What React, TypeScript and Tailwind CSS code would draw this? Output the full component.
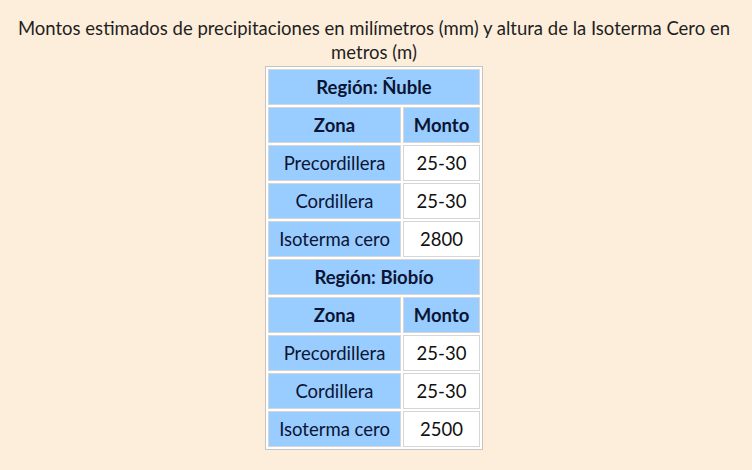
const regions = [
  { name: 'Ñuble', rows: [['Precordillera', '25-30'], ['Cordillera', '25-30'], ['Isoterma cero', '2800']] },
  { name: 'Biobío', rows: [['Precordillera', '25-30'], ['Cordillera', '25-30'], ['Isoterma cero', '2500']] },
];

const cell = 'border border-[#d6d6d6] h-[36px] p-0 text-center align-middle';

export default function App() {
  return (
    <div className="min-h-[470px] w-[752px] bg-[#fdeedb] pt-[16px] pr-[4px] font-['Lato','Open_Sans',sans-serif] text-[18.5px] leading-[24px] text-[#1f1f1f]">
      <p className="text-center px-2">
        Montos estimados de precipitaciones en milímetros (mm) y altura de la Isoterma Cero en metros (m)
      </p>
      <table className="mx-auto mt-[2px] border-separate border-spacing-[2px] border border-[#c4c4c4] bg-white">
        <tbody>
          {regions.map((r) => (
            <RegionRows key={r.name} region={r} />
          ))}
        </tbody>
      </table>
    </div>
  );
}

function RegionRows({ region }: { region: { name: string; rows: string[][] } }) {
  return (
    <>
      <tr>
        <th colSpan={2} className={`${cell} bg-[#99ccff] font-bold text-[#0b1533]`}>
          Región: {region.name}
        </th>
      </tr>
      <tr>
        <th className={`${cell} w-[133px] bg-[#99ccff] font-bold text-[#0b1533]`}>Zona</th>
        <th className={`${cell} w-[77px] bg-[#99ccff] font-bold text-[#0b1533]`}>Monto</th>
      </tr>
      {region.rows.map(([zona, monto]) => (
        <tr key={zona}>
          <td className={`${cell} bg-[#99ccff] text-[#0b1533]`}>{zona}</td>
          <td className={`${cell} bg-white text-[#111]`}>{monto}</td>
        </tr>
      ))}
    </>
  );
}
